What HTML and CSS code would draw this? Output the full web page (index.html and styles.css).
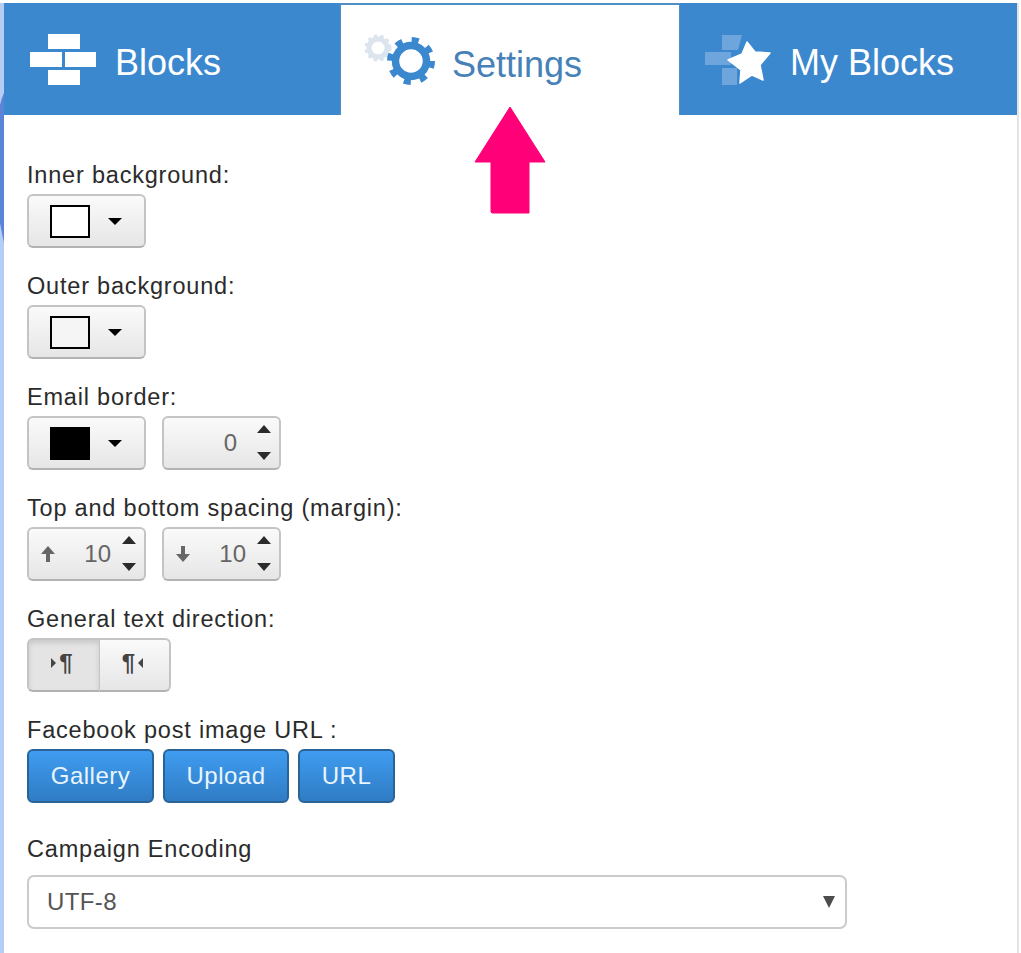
FILE: index.html
```html
<!DOCTYPE html>
<html lang="en">

<head>
    <meta charset="UTF-8">
    <meta name="viewport" content="width=device-width, initial-scale=1.0">
    <title>Settings</title>
    <link rel="stylesheet" href="styles.css">
</head>

<body>
    <div class="edge">
        <svg class="edge-curve" width="4" height="160" viewBox="0 0 4 160">
            <path d="M4 0V150Q2 140 0 130V12Q2 4 4 0Z" fill="#5b83d8" />
        </svg>
    </div>

    <div class="panel">
        <div class="tabs">
            <div class="tab">
                <svg class="tab-icon" width="66" height="52" viewBox="0 0 66 52">
                    <rect x="18" y="0" width="32" height="15" fill="#fff" />
                    <rect x="0" y="18" width="32" height="15" fill="#fff" />
                    <rect x="35" y="18" width="31" height="15" fill="#fff" />
                    <rect x="18" y="36" width="32" height="15" fill="#fff" />
                </svg>
                <span>Blocks</span>
            </div>
            <div class="tab active">
                <svg class="tab-icon" width="72" height="52" viewBox="0 0 72 52">
                    <g fill="none" stroke="#dce4ee">
                        <circle cx="14" cy="14" r="9" stroke-width="5" />
                        <circle cx="14" cy="14" r="12" stroke-dasharray="3.5 3" stroke-width="3" />
                    </g>
                    <g fill="none" stroke="#3b88cf">
                        <circle cx="47" cy="27" r="15.5" stroke-width="7.5" />
                        <circle cx="47" cy="27" r="21" stroke-width="6" stroke-dasharray="7 9.5" />
                    </g>
                </svg>
                <span>Settings</span>
            </div>
            <div class="tab">
                <svg class="tab-icon" width="66" height="52" viewBox="0 0 66 52">
                    <g fill="#6ea5dd">
                        <path d="M17 1H37L33 16H17Z" />
                        <rect x="0" y="18" width="26" height="13" />
                        <rect x="17" y="34" width="15" height="17" />
                    </g>
                    <path d="M42 8L50 18L65 19L55 31L58 46L47 41L35 49L36 36L23 26L37 20Z" fill="#fff" stroke="#fff" stroke-width="1.5" stroke-linejoin="round" />
                </svg>
                <span>My Blocks</span>
            </div>
        </div>

        <svg class="arrow" width="72" height="110" viewBox="0 0 72 110">
            <path d="M36 1L71 56H55V107H18L17 106V56H1Z" fill="#ff0078" stroke="#ff0078" stroke-width="1" stroke-linejoin="round" />
        </svg>

        <div class="form">
            <div class="field">
                <label>Inner background:</label>
                <div class="controls">
                    <button class="ctl color-btn"><i class="swatch white"></i><i class="caret"></i></button>
                </div>
            </div>

            <div class="field">
                <label>Outer background:</label>
                <div class="controls">
                    <button class="ctl color-btn"><i class="swatch light"></i><i class="caret"></i></button>
                </div>
            </div>

            <div class="field">
                <label>Email border:</label>
                <div class="controls">
                    <button class="ctl color-btn"><i class="swatch black"></i><i class="caret"></i></button>
                    <div class="ctl spinner plain">
                        <span class="value">0</span>
                        <span class="spin"><i class="up"></i><i class="down"></i></span>
                    </div>
                </div>
            </div>

            <div class="field">
                <label>Top and bottom spacing (margin):</label>
                <div class="controls">
                    <div class="ctl spinner">
                        <svg class="dir" width="14" height="16" viewBox="0 0 14 16"><path d="M7 0L14 8H9V16H5V8H0Z" fill="#666" /></svg>
                        <span class="value">10</span>
                        <span class="spin"><i class="up"></i><i class="down"></i></span>
                    </div>
                    <div class="ctl spinner">
                        <svg class="dir" width="14" height="16" viewBox="0 0 14 16"><path d="M7 16L14 8H9V0H5V8H0Z" fill="#666" /></svg>
                        <span class="value">10</span>
                        <span class="spin"><i class="up"></i><i class="down"></i></span>
                    </div>
                </div>
            </div>

            <div class="field">
                <label>General text direction:</label>
                <div class="btn-group">
                    <button class="seg pressed"><i class="tri-right"></i>¶</button>
                    <button class="seg">¶<i class="tri-left"></i></button>
                </div>
            </div>

            <div class="field">
                <label>Facebook post image URL :</label>
                <div class="controls blue-row">
                    <button class="blue gallery">Gallery</button>
                    <button class="blue upload">Upload</button>
                    <button class="blue url">URL</button>
                </div>
            </div>

            <div class="field encoding">
                <label>Campaign Encoding</label>
                <div class="select">UTF-8<i class="select-caret"></i></div>
            </div>
        </div>
    </div>
</body>

</html>
```

FILE: styles.css
```css
* {
    box-sizing: border-box;
    margin: 0;
    padding: 0;
}

html,
body {
    height: 953px;
    overflow: hidden;
}

body {
    display: flex;
    font-family: 'Liberation Sans', Arial, sans-serif;
    background-color: #fff;
    color: #2b2b2b;
    padding-top: 3px;
}

.edge {
    position: relative;
    width: 4px;
    background-color: #b4cdf5;
    flex: none;
}

.edge-curve {
    position: absolute;
    left: 0;
    top: 90px;
}

.panel {
    position: relative;
    width: 1015px;
    border-right: 2px solid #e4e4e4;
    flex: none;
}

.tabs {
    display: flex;
    height: 112px;
}

.tab {
    flex: none;
    width: 337px;
    display: flex;
    align-items: center;
    background-color: #3b88cf;
    color: #fff;
    font-size: 36px;
    padding: 7px 0 0 25px;
}

.tab:first-child {
    width: 336px;
    padding-left: 26px;
}

.tab-icon {
    margin-top: -5px;
}

.tab span {
    margin-left: 19px;
}

.tab.active {
    width: 340px;
    padding-left: 23px;
    background-color: #fff;
    color: #4682b8;
    border: 1px solid #4f8fc4;
    border-top-width: 2px;
    border-bottom: 0;
}

.tab.active span {
    margin-left: 16px;
    margin-top: 2px;
}

.tab.active .tab-icon {
    margin-top: -8px;
}

.arrow {
    position: absolute;
    left: 470px;
    top: 103px;
}

.form {
    padding: 45px 23px 0;
}

.field {
    margin-bottom: 23px;
}

label {
    display: block;
    height: 34px;
    font-size: 23.5px;
    letter-spacing: 0.8px;
    line-height: 30px;
    color: #2b2b2b;
}

.controls {
    display: flex;
    gap: 16px;
}

.ctl,
.seg {
    height: 54px;
    border: 2px solid #c4c4c4;
    border-bottom-color: #b2b2b2;
    border-radius: 6px;
    background: linear-gradient(#fafafa, #e6e6e6);
    font-family: inherit;
}

.color-btn {
    width: 119px;
    display: flex;
    align-items: center;
    padding-left: 21px;
}

.swatch {
    width: 40px;
    height: 33px;
    border: 2px solid #000;
}

.swatch.white {
    background-color: #fff;
}

.swatch.light {
    background-color: #f5f5f5;
}

.swatch.black {
    background-color: #000;
}

.caret {
    margin-left: 18px;
    border-top: 7px solid #000;
    border-left: 7px solid transparent;
    border-right: 7px solid transparent;
}

.spinner {
    position: relative;
    width: 119px;
    display: flex;
    align-items: center;
    justify-content: flex-end;
    padding-right: 33px;
    font-size: 24px;
    color: #666;
}

.spinner.plain {
    padding-right: 42px;
}

.spinner .dir {
    position: absolute;
    left: 12px;
    top: 17px;
}

.spin {
    position: absolute;
    right: 8px;
    top: 7px;
    bottom: 8px;
    display: flex;
    flex-direction: column;
    justify-content: space-between;
}

.spin .up {
    border-bottom: 8px solid #2b2b2b;
    border-left: 7px solid transparent;
    border-right: 7px solid transparent;
}

.spin .down {
    border-top: 8px solid #2b2b2b;
    border-left: 7px solid transparent;
    border-right: 7px solid transparent;
}

.btn-group {
    display: flex;
}

.seg {
    width: 72px;
    display: flex;
    align-items: center;
    justify-content: center;
    gap: 3px;
    padding: 0 4px 5px 0;
    font-size: 24px;
    font-weight: bold;
    color: #444;
}

.seg:first-child {
    border-radius: 6px 0 0 6px;
    border-right-width: 1px;
    width: 73px;
}

.seg:last-child {
    border-radius: 0 6px 6px 0;
    border-left: 0;
    width: 71px;
}

.seg.pressed {
    background: #e4e4e4;
    box-shadow: inset 0 3px 5px rgba(0, 0, 0, 0.12);
}

.tri-right {
    border-left: 5px solid #444;
    border-top: 5px solid transparent;
    border-bottom: 5px solid transparent;
}

.tri-left {
    border-right: 5px solid #444;
    border-top: 5px solid transparent;
    border-bottom: 5px solid transparent;
}

.blue-row {
    gap: 9px;
}

.blue {
    height: 54px;
    border: 2px solid #2a6496;
    border-radius: 6px;
    background: linear-gradient(#3f9cf0, #2f7cc4);
    color: #e8f5ff;
    font-family: inherit;
    font-size: 24px;
    letter-spacing: 0.5px;
}

.gallery {
    width: 127px;
}

.upload {
    width: 126px;
}

.url {
    width: 97px;
}

.encoding {
    margin-top: 31px;
}

.encoding label {
    height: 41px;
}

.select {
    position: relative;
    width: 820px;
    height: 54px;
    border: 2px solid #cbcbcb;
    border-radius: 7px;
    padding-left: 18px;
    font-size: 24px;
    letter-spacing: 0.4px;
    line-height: 49px;
    color: #555;
}

.select-caret {
    position: absolute;
    right: 10px;
    top: 19px;
    border-top: 12px solid #4d4d4d;
    border-left: 6px solid transparent;
    border-right: 6px solid transparent;
}
```
